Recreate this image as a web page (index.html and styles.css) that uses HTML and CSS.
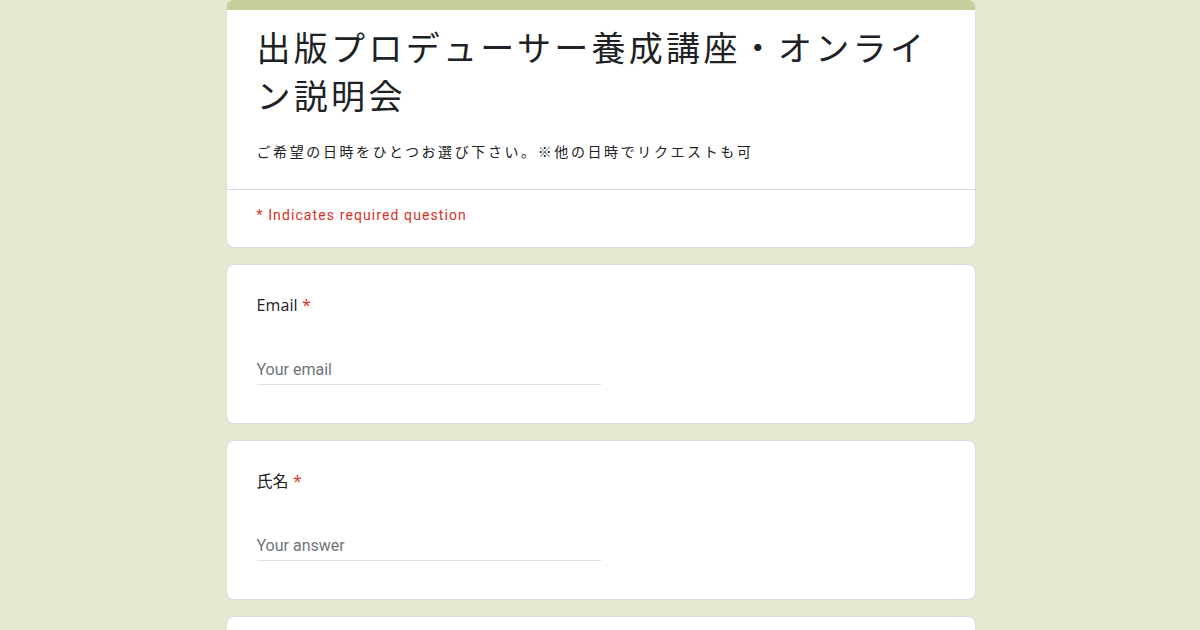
FILE: index.html
```html
<!DOCTYPE html>
<html lang="ja">
<head>
    <meta charset="UTF-8">
    <meta name="viewport" content="width=device-width, initial-scale=1.0">
    <title>出版プロデューサー養成講座・オンライン説明会</title>
    <link rel="stylesheet" href="styles.css">
</head>
<body>
    <div class="form">
        <div class="card header-card">
            <div class="header-main">
                <h1 class="title">出版プロデューサー養成講座・オンライン説明会</h1>
                <p class="desc">ご希望の日時をひとつお選び下さい。※他の日時でリクエストも可</p>
            </div>
            <div class="required-note">* Indicates required question</div>
        </div>

        <div class="card question">
            <div class="label">Email <span class="star">*</span></div>
            <div class="answer">Your email</div>
        </div>

        <div class="card question">
            <div class="label">氏名 <span class="star">*</span></div>
            <div class="answer">Your answer</div>
        </div>

        <div class="card question"></div>
    </div>
</body>
</html>
```

FILE: styles.css
```css
body {
    margin: 0;
    background-color: #e6e9d1;
    font-family: Roboto, "Noto Sans CJK JP", sans-serif;
    color: #202124;
}
.form {
    width: 750px;
    margin: 0 auto;
    padding-left: 1px;
    display: flex;
    flex-direction: column;
    gap: 16px;
}
.card {
    background-color: #fff;
    border: 1px solid #dadce0;
    border-radius: 8px;
}
.header-card {
    border-top: 10px solid #c5cf9b;
}
.header-main {
    padding: 13px 30px 28px;
    border-bottom: 1px solid #dadce0;
}
.title {
    margin: 0;
    font-family: "Noto Sans CJK JP", sans-serif;
    font-size: 34px;
    font-weight: 400;
    letter-spacing: 3.3px;
    line-height: 48px;
    color: #202124;
}
.desc {
    margin: 22px 0 0;
    font-family: "Noto Sans CJK JP", sans-serif;
    font-size: 14px;
    letter-spacing: 2.6px;
    line-height: 20px;
}
.required-note {
    padding: 14px 30px 21px;
    font-size: 14px;
    letter-spacing: 1.1px;
    line-height: 22px;
    color: #d93025;
}
.question {
    height: 160px;
    padding: 0 30px;
    box-sizing: border-box;
}
.label {
    margin-top: 28px;
    font-size: 16px;
    line-height: 24px;
    letter-spacing: 0.1px;
    font-family: "Open Sans", "Noto Sans CJK JP", sans-serif;
}
.star {
    color: #d93025;
}
.answer {
    margin-top: 42px;
    width: 344px;
    padding-bottom: 3px;
    border-bottom: 1px solid #e0e0e0;
    font-size: 16px;
    line-height: 22px;
    color: #70757a;
}
```
